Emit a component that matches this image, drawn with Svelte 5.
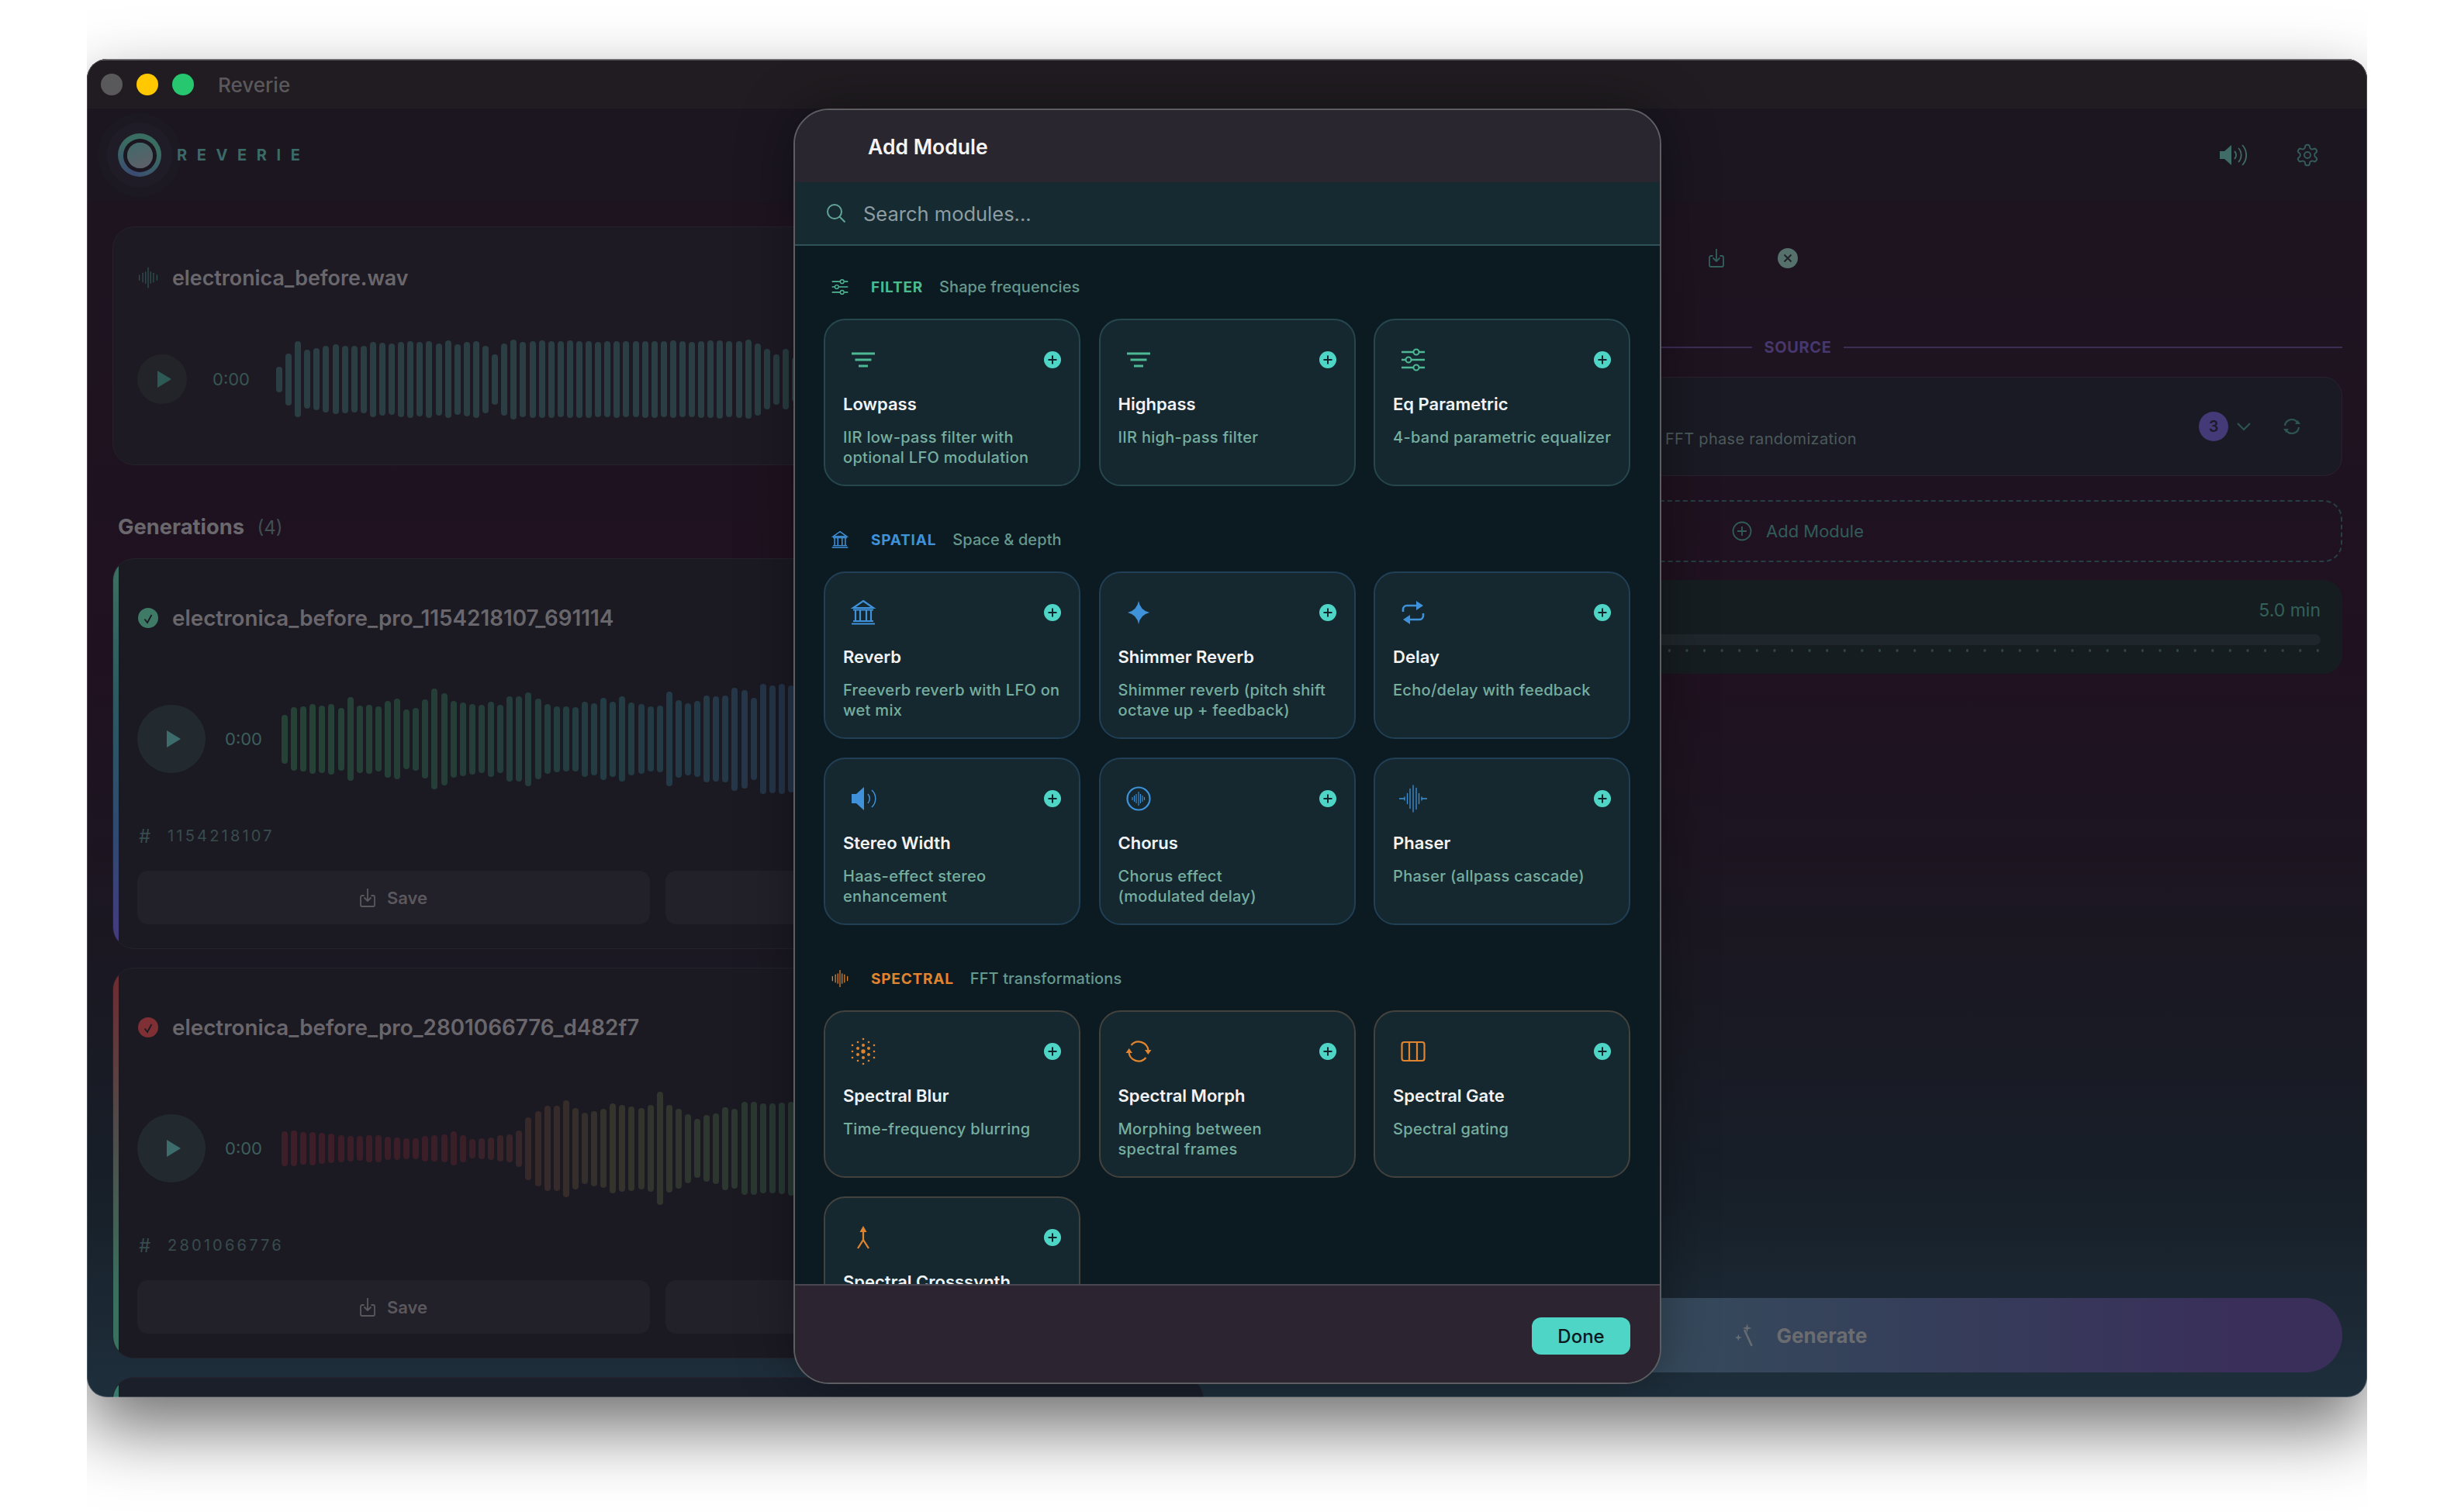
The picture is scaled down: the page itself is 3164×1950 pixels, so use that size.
<script>
  const sourceBars = [33,67,98,76,80,86,90,87,86,87,97,94,92,97,99,96,99,93,100,91,96,99,87,65,93,103,97,99,100,99,98,100,99,99,97,98,99,98,98,99,99,98,100,98,97,99,100,101,98,99,102,93,78,65,78,57,87];
  const genBars1 = [63,82,84,90,87,91,81,108,87,89,84,99,104,77,81,102,130,119,99,95,91,88,97,88,110,110,121,104,90,85,84,83,97,93,106,97,110,94,90,84,86,122,100,93,98,112,110,112,133,127,106,142,139,142,138];
  const genBars2 = [45,46,42,43,40,38,35,33,32,35,35,30,29,27,27,33,34,36,44,35,25,27,29,34,36,47,81,97,110,110,125,105,92,97,102,116,112,109,105,112,146,113,103,89,76,86,91,107,103,120,120,116,116,118,121];

  const hex = (c) => c.map((v) => Math.round(v).toString(16).padStart(2, '0')).join('');

  // colour along the stops of a generation's waveform
  function tint(stops, t) {
    const n = stops.length - 1;
    const i = Math.min(Math.floor(t * n), n - 1);
    const f = t * n - i;
    return '#' + hex(stops[i].map((v, k) => v + (stops[i + 1][k] - v) * f));
  }

  const stops1 = [[38, 66, 54], [37, 62, 56], [36, 60, 68], [37, 53, 74]];
  const stops2 = [[62, 30, 40], [58, 30, 40], [52, 52, 44], [40, 58, 52]];

  const generations = [
    { name: 'electronica_before_pro_1154218107_691114', seed: '1154218107', bars: genBars1, stops: stops1, cls: 'ok' },
    { name: 'electronica_before_pro_2801066776_d482f7', seed: '2801066776', bars: genBars2, stops: stops2, cls: 'bad' }
  ];

  const sections = [
    {
      key: 'filter', icon: 'sliders', label: 'FILTER', sub: 'Shape frequencies',
      items: [
        { icon: 'lines', name: 'Lowpass', desc: 'IIR low-pass filter with\noptional LFO modulation' },
        { icon: 'lines', name: 'Highpass', desc: 'IIR high-pass filter' },
        { icon: 'sliders', name: 'Eq Parametric', desc: '4-band parametric equalizer' }
      ]
    },
    {
      key: 'spatial', icon: 'columns', label: 'SPATIAL', sub: 'Space & depth',
      items: [
        { icon: 'columns', name: 'Reverb', desc: 'Freeverb reverb with LFO on\nwet mix' },
        { icon: 'sparkle', name: 'Shimmer Reverb', desc: 'Shimmer reverb (pitch shift\noctave up + feedback)' },
        { icon: 'repeat', name: 'Delay', desc: 'Echo/delay with feedback' },
        { icon: 'speaker', name: 'Stereo Width', desc: 'Haas-effect stereo\nenhancement' },
        { icon: 'wavecircle', name: 'Chorus', desc: 'Chorus effect\n(modulated delay)' },
        { icon: 'wave', name: 'Phaser', desc: 'Phaser (allpass cascade)' }
      ]
    },
    {
      key: 'spectral', icon: 'bars', label: 'SPECTRAL', sub: 'FFT transformations',
      items: [
        { icon: 'dots', name: 'Spectral Blur', desc: 'Time-frequency blurring' },
        { icon: 'morph', name: 'Spectral Morph', desc: 'Morphing between\nspectral frames' },
        { icon: 'split', name: 'Spectral Gate', desc: 'Spectral gating' },
        { icon: 'merge', name: 'Spectral Crosssynth', desc: 'Cross-synthesis of\ntwo sources' }
      ]
    }
  ];

  const titleWave = [[2, 8], [7.500, 14], [12, 18], [16, 32], [20, 18], [24.500, 14], [30, 8]];
  const phaserWave = [[5, 4], [8.500, 13], [12, 25], [16, 34], [20, 27], [23.500, 13], [27, 4]];

  // hex grid of dots, bigger towards the middle
  const blurDots = [
    [0, 0, 2.700],
    [0, -8, 2], [0, 8, 2], [-7, -4, 2], [7, -4, 2], [-7, 4, 2], [7, 4, 2],
    [0, -16, 1.300], [0, 16, 1.300], [-7, -12, 1.300], [7, -12, 1.300], [-7, 12, 1.300], [7, 12, 1.300],
    [-14, -8, 1.300], [14, -8, 1.300], [-14, 0, 1.300], [14, 0, 1.300], [-14, 8, 1.300], [14, 8, 1.300]
  ].map(([x, y, r]) => ({ x: 16 + x, y: 16 + y, r }));
</script>

{#snippet glyph(name)}
  <svg class="glyph" viewBox="0 0 32 32" fill="none" stroke="currentColor" stroke-width="2">
    {#if name === 'lines'}
      <path d="M1 8h30M5.500 16h21M10 24h12" stroke-width="3" />
    {:else if name === 'sliders'}
      <path d="M1 6h15M24 6h7M1 16h5M14 16h17M1 26h15M24 26h7" stroke-width="2.500" />
      <circle cx="20" cy="6" r="3.500" /><circle cx="10" cy="16" r="3.500" /><circle cx="20" cy="26" r="3.500" />
    {:else if name === 'columns'}
      <path d="M16 1 29 10H3Z" stroke-width="2.200" />
      <path d="M3 12.500h26M1 30.500h30M3 27h26" stroke-width="2" />
      <path d="M6 13v14M12 13v14M20 13v14M26 13v14" stroke-width="2.200" />
    {:else if name === 'sparkle'}
      <path d="M16 1Q18 13 30 16 18 19 16 31 14 19 2 16 14 13 16 1Z" fill="currentColor" stroke="none" />
    {:else if name === 'repeat'}
      <path d="M3 15V12a5 5 0 0 1 5-5h14M29 17v3a5 5 0 0 1-5 5H10" stroke-width="2.600" />
      <path d="M20 1 29 7 20 13ZM12 19 3 25 12 31Z" fill="currentColor" stroke="none" />
    {:else if name === 'speaker'}
      <path d="M1 10h6l10-9v30L7 22H1Z" fill="currentColor" stroke="none" />
      <path d="M22 10a9 9 0 0 1 0 12M27 5a15 15 0 0 1 0 22" stroke-width="1.500" />
    {:else if name === 'wavecircle'}
      <circle cx="16" cy="16" r="14.500" stroke-width="2.200" />
      {#each [[8, 4], [10.500, 8], [13, 12], [16, 18], [18.500, 12], [21, 8], [23.500, 4]] as [x, h]}
        <path d="M{x} {16 - h / 2}v{h}" stroke-width="1.100" />
      {/each}
    {:else if name === 'wave'}
      <path d="M-2 16h7M27 16h7" stroke-width="1.500" />
      {#each phaserWave as [x, h]}
        <path d="M{x} {16 - h / 2}v{h}" stroke-width="1.300" stroke-linecap="round" />
      {/each}
    {:else if name === 'bars'}
      {#each titleWave as [x, h]}
        <path d="M{x} {16 - h / 2}v{h}" stroke-width="1.800" stroke-linecap="round" />
      {/each}
    {:else if name === 'dots'}
      {#each blurDots as d}
        <circle cx={d.x} cy={d.y} r={d.r} fill="currentColor" stroke="none" />
      {/each}
    {:else if name === 'morph'}
      <path d="M6.500 8A12.500 12.500 0 0 1 28.500 15M25.500 24A12.500 12.500 0 0 1 3.500 17" stroke-width="2.200" />
      <path d="M24 14h8.500l-4.200 6ZM8 18H-.5l4.200-6Z" fill="currentColor" stroke="none" />
    {:else if name === 'split'}
      <rect x="1.500" y="4" width="29" height="24" rx="3" stroke-width="2.200" />
      <path d="M11 4v24M21 4v24" stroke-width="2.200" />
    {:else if name === 'merge'}
      <path d="M16 8v11L9 30M16 19l7 11" stroke-width="2.300" />
      <path d="M11.500 9 16 1l4.500 8Z" fill="currentColor" stroke="none" />
    {/if}
  </svg>
{/snippet}

{#snippet playButton(big)}
  <button class="play" class:big aria-label="Play">
    <svg viewBox="0 0 20 24"><path d="M1 1 19 12 1 23Z" fill="currentColor" /></svg>
  </button>
{/snippet}

{#snippet saveIcon()}
  <svg class="save-icon" viewBox="0 0 20 26" fill="none" stroke="currentColor" stroke-width="1.800">
    <path d="M5.500 10H3a2 2 0 0 0-2 2v10a2 2 0 0 0 2 2h14a2 2 0 0 0 2-2V12a2 2 0 0 0-2-2h-2.500" />
    <path d="M10 1v16M5.500 12.500 10 17l4.500-4.500" />
  </svg>
{/snippet}

<div class="stage">
  <div class="window">
    <header class="titlebar">
      <span class="light grey"></span>
      <span class="light yellow"></span>
      <span class="light green"></span>
      <span class="title">Reverie</span>
    </header>

    <div class="appbar">
      <div class="brand">
        <div class="logo"><span></span></div>
        <span class="wordmark">REVERIE</span>
      </div>
      <div class="appbar-actions">
        <svg class="speaker" viewBox="0 0 36 30" fill="none" stroke="currentColor" stroke-width="1.800">
          <path d="M1 10h6l9-8v26l-9-8H1Z" fill="currentColor" stroke="none" />
          <path d="M20 10a7 7 0 0 1 0 10M25 6a13 13 0 0 1 0 18M30 2a19 19 0 0 1 0 26" />
        </svg>
        <svg class="gear" viewBox="0 0 24 24" fill="none" stroke="currentColor" stroke-width="1.500">
          <path d="M12.220 2h-.44a2 2 0 0 0-2 2v.18a2 2 0 0 1-1 1.730l-.43.25a2 2 0 0 1-2 0l-.15-.08a2 2 0 0 0-2.730.73l-.22.38a2 2 0 0 0 .73 2.730l.15.1a2 2 0 0 1 1 1.720v.51a2 2 0 0 1-1 1.740l-.15.09a2 2 0 0 0-.73 2.730l.22.38a2 2 0 0 0 2.730.73l.15-.08a2 2 0 0 1 2 0l.43.25a2 2 0 0 1 1 1.730V20a2 2 0 0 0 2 2h.44a2 2 0 0 0 2-2v-.18a2 2 0 0 1 1-1.730l.43-.25a2 2 0 0 1 2 0l.15.08a2 2 0 0 0 2.730-.73l.22-.39a2 2 0 0 0-.73-2.730l-.15-.08a2 2 0 0 1-1-1.740v-.5a2 2 0 0 1 1-1.740l.15-.09a2 2 0 0 0 .73-2.730l-.22-.38a2 2 0 0 0-2.730-.73l-.15.08a2 2 0 0 1-2 0l-.43-.25a2 2 0 0 1-1-1.730V4a2 2 0 0 0-2-2z" />
          <circle cx="12" cy="12" r="3" />
        </svg>
      </div>
    </div>

    <div class="columns">
      <section class="left">
        <article class="card source">
          <div class="card-title">
            <svg class="title-wave" viewBox="0 0 32 32" fill="none" stroke="currentColor">
              {#each titleWave as [x, h]}
                <path d="M{x} {16 - h / 2}v{h}" stroke-width="1.500" stroke-linecap="round" />
              {/each}
            </svg>
            <span>electronica_before.wav</span>
          </div>
          <div class="player small">
            {@render playButton(false)}
            <span class="time">0:00</span>
            <div class="bars">
              {#each sourceBars as h}
                <i style:height="{h}px"></i>
              {/each}
            </div>
          </div>
        </article>

        <h2 class="gen-head">Generations <span>(4)</span></h2>

        {#each generations as g}
          <article class="card gen {g.cls}">
            <div class="card-title">
              <span class="status">
                <svg viewBox="0 0 26 26" fill="none" stroke="#1a1a22" stroke-width="1.800"><path d="M8.500 13.500 12 18l5.500-10" /></svg>
              </span>
              <span>{g.name}</span>
            </div>
            <div class="player">
              {@render playButton(true)}
              <span class="time">0:00</span>
              <div class="bars">
                {#each g.bars as h, i}
                  <i style:height="{h}px" style:background={tint(g.stops, i / (g.bars.length - 1))}></i>
                {/each}
              </div>
            </div>
            <div class="seed"><span class="hash">#</span><span>{g.seed}</span></div>
            <div class="gen-actions">
              <button class="ghost">{@render saveIcon()}<span>Save</span></button>
              <button class="ghost" aria-label="More"></button>
            </div>
          </article>
        {/each}

        <article class="card gen peek"></article>
      </section>

      <section class="right">
        <div class="preset-row">
          {@render saveIcon()}
          <span class="close">
            <svg viewBox="0 0 26 26" fill="none" stroke="#1c2226" stroke-width="1.800"><path d="m8.500 8.500 9 9M17.500 8.500l-9 9" /></svg>
          </span>
        </div>

        <div class="divider"><span>SOURCE</span></div>

        <div class="module">
          <span class="module-desc">FFT phase randomization</span>
          <span class="badge">3</span>
          <svg class="chevron" viewBox="0 0 20 12" fill="none" stroke="currentColor" stroke-width="2.200"><path d="m2 2 8 8 8-8" /></svg>
          <svg class="refresh" viewBox="0 0 24 24" fill="none" stroke="currentColor" stroke-width="2.200">
            <path d="M3 11A9 9 0 0 1 19 6.500M21 13A9 9 0 0 1 5 17.500" />
            <path d="M16 9h7l-3.500-5ZM1 15h7l-3.500 5Z" fill="currentColor" stroke="none" />
          </svg>
        </div>

        <button class="add-module">
          <svg viewBox="0 0 26 26" fill="none" stroke="currentColor" stroke-width="1.800"><circle cx="13" cy="13" r="11.500" /><path d="M13 7v12M7 13h12" /></svg>
          <span>Add Module</span>
        </button>

        <div class="duration">
          <div class="duration-value">5.0 min</div>
          <div class="track"></div>
          <div class="ticks"></div>
        </div>

        <button class="generate">
          <svg viewBox="0 0 30 34" fill="none" stroke="currentColor" stroke-width="2">
            <path d="M14 9l11 24" stroke-width="3" />
            <path d="M18 0l1.500 5L25 6.500l-5.500 1.500L18 13l-1.500-5L11 6.500l5.500-1.500ZM5 15l1.200 4L10 20.500 6.200 22 5 26l-1.200-4L0 20.500l3.800-1.500Z" fill="currentColor" stroke="none" />
          </svg>
          <span>Generate</span>
        </button>
      </section>
    </div>

    <div class="modal" role="dialog" aria-label="Add Module">
      <div class="modal-head">Add Module</div>
      <div class="search">
        <svg viewBox="0 0 26 26" fill="none" stroke="currentColor" stroke-width="2"><circle cx="11" cy="11" r="9" /><path d="m17.500 17.500 7 7" /></svg>
        <span>Search modules...</span>
      </div>
      <div class="modal-body">
        {#each sections as s}
          <section class="group {s.key}">
            <div class="group-head">
              <span class="group-icon">{@render glyph(s.icon)}</span>
              <strong>{s.label}</strong>
              <span>{s.sub}</span>
            </div>
            <div class="grid">
              {#each s.items as m}
                <div class="tile">
                  <div class="tile-top">
                    <span class="tile-icon">{@render glyph(m.icon)}</span>
                    <span class="plus">
                      <svg viewBox="0 0 22 22" fill="none" stroke="#10222a" stroke-width="2"><path d="M11 5.500v11M5.500 11h11" /></svg>
                    </span>
                  </div>
                  <div class="tile-name">{m.name}</div>
                  <div class="tile-desc">{m.desc}</div>
                </div>
              {/each}
            </div>
          </section>
        {/each}
      </div>
      <div class="modal-foot">
        <button class="done">Done</button>
      </div>
    </div>
  </div>
</div>

<style>
  :global(body) {
    margin: 0;
    background: #fff;
  }

  button {
    font-family: inherit;
    border: none;
    padding: 0;
  }

  .stage {
    width: 2940px;
    height: 1950px;
    margin-left: 112px;
    padding-top: 76px;
    box-sizing: border-box;
    overflow: hidden;
    font-family: Inter, 'Liberation Sans', sans-serif;
  }

  .window {
    position: relative;
    width: 2940px;
    height: 1726px;
    display: flex;
    flex-direction: column;
    border-radius: 26px;
    overflow: hidden;
    background: linear-gradient(180deg, #1d1520 0%, #201120 45%, #1a1822 68%, #171f28 85%, #1e2f3c 100%);
  }

  .window::after {
    content: '';
    position: absolute;
    inset: 0;
    border-radius: 26px;
    border: 1.500px solid rgba(255, 255, 255, 0.2);
    pointer-events: none;
  }

  .stage::before {
    content: '';
    position: absolute;
    left: 112px;
    top: 76px;
    width: 2940px;
    height: 1726px;
    border-radius: 26px;
    box-shadow: 0 40px 90px rgba(0, 0, 0, 0.56);
    clip-path: inset(-80px 0 -150px 0);
  }

  .titlebar {
    flex: none;
    height: 64px;
    display: flex;
    align-items: center;
    padding-left: 18px;
    gap: 18px;
    background: #201c21;
    border-top: 2px solid #55555a;
    box-sizing: border-box;
  }

  .light {
    width: 28px;
    height: 28px;
    border-radius: 50%;
  }

  .grey { background: #59595b; }
  .yellow { background: #ffc800; }
  .green { background: #27c76f; }

  .title {
    margin-left: 13px;
    font-size: 26px;
    font-weight: 500;
    color: #5b585c;
  }

  .appbar {
    flex: none;
    height: 120px;
    display: flex;
    align-items: center;
    justify-content: space-between;
    background: #1b1620;
    padding: 0 61px 0 40px;
  }

  .brand {
    display: flex;
    align-items: center;
    gap: 20px;
  }

  .logo {
    width: 56px;
    height: 56px;
    border-radius: 50%;
    background: conic-gradient(from 200deg, #3b4a72, #3a6d62, #3a6d62, #3b4a72);
    display: grid;
    place-items: center;
    box-shadow: 0 0 0 14px #1f1c27, 0 0 0 26px #1c1923;
  }

  .logo span {
    width: 33px;
    height: 33px;
    border-radius: 50%;
    background: linear-gradient(160deg, #3f6a6a, #625f68);
    box-shadow: 0 0 0 5px #1b1620;
  }

  .wordmark {
    font-size: 20px;
    font-weight: 700;
    letter-spacing: 12.600px;
    color: #3b6a68;
  }

  .appbar-actions {
    display: flex;
    align-items: center;
    gap: 62px;
    color: #3f6c66;
  }

  .speaker {
    width: 36px;
    height: 30px;
  }

  .gear {
    width: 32px;
    height: 32px;
    color: #34595a;
  }

  .columns {
    flex: 1;
    min-height: 0;
    display: grid;
    grid-template-columns: 1472px 1fr;
  }

  .left {
    padding: 32px 32px 0 33px;
    overflow: hidden;
  }

  .card {
    position: relative;
    border-radius: 28px;
    overflow: hidden;
    border: 1px solid #25222d;
    box-sizing: border-box;
    background: #1e1a24;
  }

  .source {
    height: 308px;
    padding: 50px 32px 0 31px;
  }

  .card-title {
    height: 30px;
    display: flex;
    align-items: center;
    font-size: 27.800px;
    font-weight: 600;
    color: #6a676c;
  }

  .source .card-title {
    font-size: 26.800px;
  }

  .title-wave {
    width: 26px;
    height: 30px;
    margin: 0 18px 0 1px;
    color: #2f5554;
  }

  .player {
    display: flex;
    align-items: center;
    height: 150px;
    margin-top: 66px;
  }

  .player.small {
    height: 110px;
    margin-top: 61px;
  }

  .play {
    flex: none;
    width: 88px;
    height: 88px;
    border-radius: 50%;
    background: #222a30;
    color: #3d6c6c;
    display: grid;
    place-items: center;
    padding-left: 6px;
  }

  .play svg {
    width: 20px;
    height: 24px;
  }

  .small .play {
    width: 64px;
    height: 64px;
    background: #232429;
    color: #2d5a55;
  }

  .time {
    flex: none;
    margin: 0 25px 0 25px;
    font-size: 22px;
    color: #3c5f5c;
  }

  .small .time {
    margin: 0 34px 0 33px;
    color: #375653;
  }

  .bars {
    display: flex;
    align-items: center;
    gap: 4.100px;
  }

  .bars i {
    flex: none;
    width: 8px;
    border-radius: 4px;
    background: #2a3e43;
  }

  .gen-head {
    margin: 63px 0 23px 7px;
    height: 34px;
    line-height: 34px;
    font-size: 27.300px;
    font-weight: 700;
    color: #6a686c;
  }

  .gen-head span {
    margin-left: 10px;
    font-size: 24px;
    font-weight: 400;
    color: #3f4f52;
  }

  .gen {
    height: 504px;
    margin-bottom: 24px;
    padding: 61px 32px 0 31px;
    background: #1b1a23;
  }

  .gen::before {
    content: '';
    position: absolute;
    left: 0;
    top: 0;
    bottom: 0;
    width: 7px;
    background: linear-gradient(180deg, #3d7060, #2c5a60 35%, #2f4a70 70%, #463a80);
  }

  .bad::before {
    background: linear-gradient(180deg, #702a30, #504a4a 40%, #3a7060 85%);
  }

  .peek {
    background: #1a1f2a;
  }

  .peek::before {
    background: #3a7a6c;
  }

  .status {
    width: 26px;
    height: 26px;
    margin: 0 18px 0 1px;
    border-radius: 50%;
    background: #3f7a66;
  }

  .bad .status {
    background: #7e3035;
  }

  .seed {
    display: flex;
    align-items: center;
    height: 24px;
    margin-top: 38px;
    font-size: 20px;
    letter-spacing: 3.200px;
    color: #384c4e;
  }

  .hash {
    width: 39px;
    font-size: 24px;
    letter-spacing: 0;
    padding-left: 2px;
    box-sizing: border-box;
  }

  .gen-actions {
    display: grid;
    grid-template-columns: 1fr 1fr;
    gap: 20px;
    margin-top: 33px;
  }

  .ghost {
    height: 69px;
    border-radius: 14px;
    background: #22212a;
    color: #5a585d;
    display: flex;
    align-items: center;
    justify-content: center;
    gap: 15px;
    font-size: 22px;
    font-weight: 600;
  }

  .save-icon {
    width: 20px;
    height: 26px;
  }

  .right {
    display: flex;
    flex-direction: column;
    padding: 0 32px 32px;
    min-height: 0;
  }

  .preset-row {
    display: flex;
    align-items: center;
    height: 50px;
    margin-top: 48px;
    padding-left: 587px;
    color: #32605c;
    gap: 69px;
  }

  .close {
    width: 26px;
    height: 26px;
    border-radius: 50%;
    background: #56706c;
  }

  .divider {
    display: flex;
    align-items: center;
    gap: 16px;
    height: 30px;
    margin-top: 75px;
    font-size: 20px;
    font-weight: 700;
    letter-spacing: 0.6px;
    color: #46386c;
  }

  .divider::before,
  .divider::after {
    content: '';
    flex: 1;
    height: 2px;
    background: #3a2e55;
  }

  .module {
    display: flex;
    align-items: center;
    height: 128px;
    margin-top: 23px;
    padding-right: 52px;
    border: 1px solid #2c2030;
    border-radius: 24px;
    box-sizing: border-box;
    background: #1a1a24;
    color: #2e5452;
  }

  .module-desc {
    flex: 1;
    padding: 31px 0 0 530px;
    font-size: 20px;
    letter-spacing: 0.3px;
    color: #4d5a5b;
  }

  .badge {
    width: 38px;
    height: 38px;
    border-radius: 50%;
    background: #443a78;
    color: #1d1a2e;
    font-size: 20px;
    font-weight: 600;
    text-align: center;
    line-height: 38px;
  }

  .chevron {
    width: 20px;
    height: 12px;
    margin: 0 40px 0 10px;
  }

  .refresh {
    width: 24px;
    height: 24px;
  }

  .add-module {
    height: 80px;
    margin-top: 31px;
    display: flex;
    align-items: center;
    justify-content: center;
    gap: 18px;
    background: transparent;
    border: 2px dashed #263f44;
    border-radius: 24px;
    color: #315c58;
    font-size: 22px;
  }

  .add-module svg {
    width: 26px;
    height: 26px;
  }

  .duration {
    height: 121px;
    margin-top: 23px;
    padding: 26px 28px 0;
    box-sizing: border-box;
    border-radius: 24px;
    background: #161d20;
  }

  .duration-value {
    text-align: right;
    height: 26px;
    line-height: 26px;
    font-size: 23px;
    color: #33605a;
  }

  .track {
    height: 14px;
    margin-top: 18px;
    border-radius: 7px;
    background: #20272c;
  }

  .ticks {
    height: 4px;
    margin-top: 5px;
    background: radial-gradient(circle, #33444a 1.500px, transparent 2px) 0 0 / 22.600px 4px repeat-x;
  }

  .generate {
    margin-top: auto;
    height: 96px;
    border-radius: 48px;
    background: linear-gradient(90deg, #354a5c 0%, #364a5c 38%, #353f5a 60%, #3a2e5a 92%);
    color: #6b6c70;
    display: flex;
    align-items: center;
    justify-content: center;
    gap: 28px;
    padding-left: 8px;
    font-size: 26px;
    font-weight: 700;
  }

  .generate svg {
    width: 26px;
    height: 30px;
    color: #656c72;
  }

  .modal {
    position: absolute;
    left: 911px;
    top: 64px;
    width: 1119px;
    height: 1645px;
    display: flex;
    flex-direction: column;
    box-sizing: border-box;
    border: 2px solid #5d5d62;
    border-radius: 46px;
    overflow: hidden;
    background: #0c1b22;
    box-shadow: 0 0 70px rgba(0, 0, 0, 0.35);
  }

  .modal-head {
    flex: none;
    height: 93px;
    padding: 0 94px;
    display: flex;
    align-items: center;
    background: #2a2630;
    color: #f4f4f6;
    font-size: 26.500px;
    font-weight: 600;
  }

  .search {
    flex: none;
    height: 82px;
    display: flex;
    align-items: center;
    gap: 22px;
    padding: 0 40px;
    box-sizing: border-box;
    background: #162a32;
    border-bottom: 2px solid #2f5258;
    color: #62a597;
    font-size: 25.500px;
  }

  .search svg {
    width: 26px;
    height: 26px;
  }

  .search span {
    color: #8f9da0;
  }

  .modal-body {
    flex: 1;
    min-height: 0;
    overflow: hidden;
    padding: 38px 38px 0 37px;
  }

  .group {
    margin-bottom: 54px;
  }

  .group-head {
    display: flex;
    align-items: center;
    height: 30px;
    padding-left: 10px;
    font-size: 20px;
    font-weight: 500;
    letter-spacing: 0.1px;
    color: #66988d;
  }

  .group-icon {
    width: 22px;
    height: 22px;
    margin-right: 29px;
    display: flex;
  }

  .group-head strong {
    margin-right: 21px;
    font-size: 19px;
    font-weight: 700;
    letter-spacing: 0.8px;
  }

  .grid {
    display: grid;
    grid-template-columns: repeat(3, 331px);
    column-gap: 23.500px;
    row-gap: 24px;
    margin-top: 26px;
  }

  .tile {
    min-height: 216px;
    padding: 26px 23px 21px;
    box-sizing: border-box;
    border-radius: 28px;
    border: 2.500px solid #26474e;
    background: #152830;
  }

  .tile-top {
    display: flex;
    align-items: center;
    justify-content: space-between;
    height: 49px;
  }

  .tile-icon {
    width: 52px;
    display: flex;
    justify-content: center;
  }

  .tile-icon :global(.glyph) {
    width: 32px;
    height: 32px;
    overflow: visible;
  }

  .plus {
    width: 22px;
    height: 22px;
    border-radius: 50%;
    background: #4fd5c5;
    display: flex;
  }

  .tile-name {
    margin-top: 20px;
    height: 26px;
    line-height: 26px;
    font-size: 22px;
    font-weight: 600;
    color: #f2f3f4;
  }

  .tile-desc {
    margin-top: 17px;
    font-size: 20px;
    line-height: 26px;
    font-weight: 500;
    letter-spacing: 0.3px;
    white-space: pre;
    color: #76ae9f;
  }

  .glyph {
    width: 100%;
    height: 100%;
  }

  .filter .group-icon,
  .filter .tile-icon,
  .filter strong { color: #4db893; }

  .spatial .group-icon,
  .spatial .tile-icon,
  .spatial strong { color: #3f92d9; }

  .spectral .group-icon,
  .spectral .tile-icon,
  .spectral strong { color: #e0842f; }

  .spatial .tile { border-color: #213f55; }
  .spectral .tile { border-color: #44423e; }

  .modal-foot {
    flex: none;
    height: 127px;
    display: flex;
    justify-content: flex-end;
    padding: 41px 38px 0 0;
    box-sizing: border-box;
    background: #2c2431;
    border-top: 2px solid #4a4650;
  }

  .done {
    width: 127px;
    height: 48px;
    border-radius: 12px;
    background: #4fd5c5;
    color: #0b1a1e;
    font-size: 24px;
    font-weight: 500;
  }
</style>
